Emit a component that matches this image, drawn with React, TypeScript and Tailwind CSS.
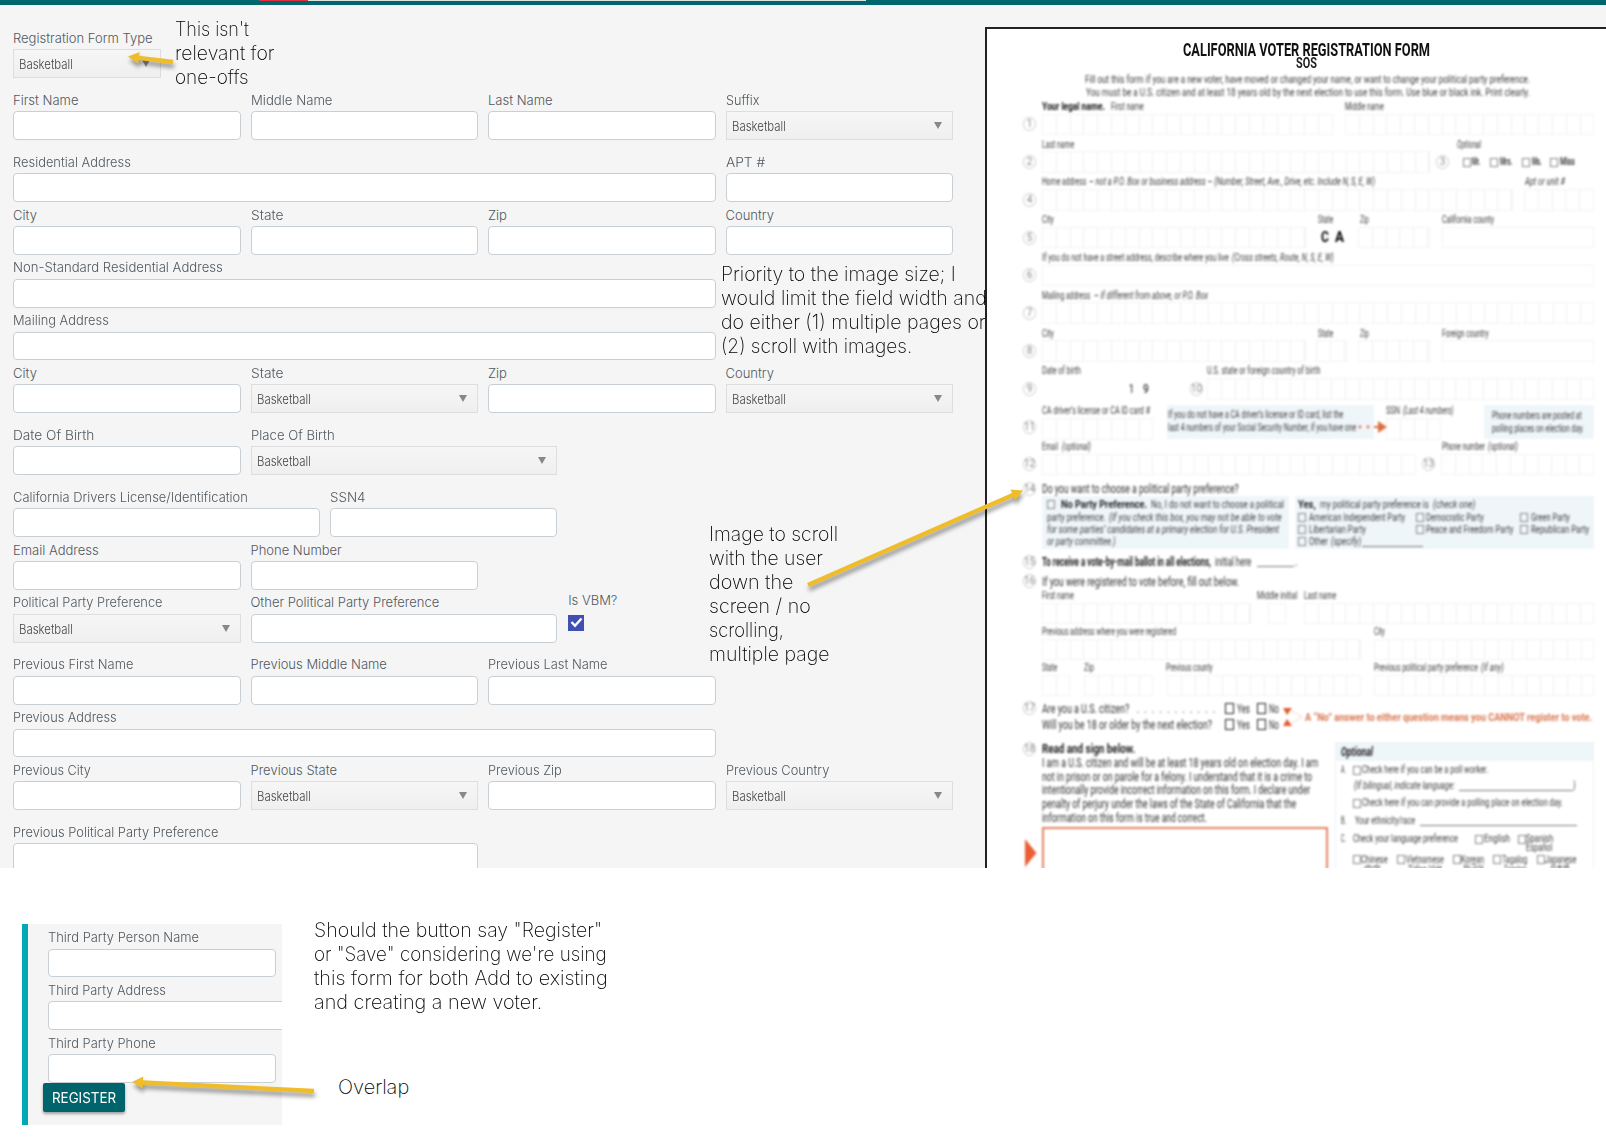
import { useLayoutEffect, useRef, useState, type ReactNode } from "react";

/* Single-line text stretched or condensed to a given width. */
function Fit({ w, children, className = "" }: { w: number; children: ReactNode; className?: string }) {
  const ref = useRef<HTMLSpanElement>(null);
  const [s, setS] = useState(1);
  useLayoutEffect(() => {
    if (ref.current && ref.current.offsetWidth) setS(w / ref.current.offsetWidth);
  }, [w]);
  return (
    <span className={"block shrink-0 whitespace-nowrap " + className} style={{ width: w }}>
      <span ref={ref} className="inline-block origin-left" style={{ transform: `scaleX(${s})` }}>
        {children}
      </span>
    </span>
  );
}

function Label({ t, w }: { t: string; w: number }) {
  return (
    <Fit w={w} className="h-6 pt-[0.500px] text-[13px] leading-6 font-light text-[#50585f]">
      {t}
    </Fit>
  );
}

function Field({ t, w, span }: { t: string; w: number; span: string }) {
  return (
    <div className={span}>
      <Label t={t} w={w} />
      <div className="h-[28.75px] rounded-[4px] border border-[#c8d0d6] bg-white" />
    </div>
  );
}

function Select({ t, w, span }: { t: string; w: number; span: string }) {
  return (
    <div className={span + " pb-[9.25px]"}>
      <Label t={t} w={w} />
      <div className="flex h-[28.75px] items-center justify-between border border-[#dedede] bg-linear-to-b from-[#f6f6f6] to-[#efefef] pr-[10px] pl-[5px]">
        <Fit w={54} className="pt-px text-[13.5px] leading-5 font-light text-[#444]">
          Basketball
        </Fit>
        <svg width="8" height="7" viewBox="0 0 8 7">
          <path d="M0 0h8L4 7z" fill="#888" />
        </svg>
      </div>
    </div>
  );
}

function Row({ children }: { children: ReactNode }) {
  return <div className="grid w-[940px] grid-cols-12 gap-x-[10px]">{children}</div>;
}

function Note({ lines, className }: { lines: [string, number][]; className: string }) {
  return (
    <div className={"absolute " + className}>
      {lines.map(([t, w]) => (
        <Fit key={t} w={w} className="h-[24.1px] text-[20px] leading-[24.1px] font-extralight text-black">
          {t}
        </Fit>
      ))}
    </div>
  );
}

/* ---------- Paper form ---------- */

type Item =
  | ["t", number, number, string, string?]
  | ["c", number, string?]
  | ["u", number, number]
  | ["g", number, number]
  | ["b", number, number]
  | ["n", number, string]
  | ["x", number, number, ReactNode];

function Badge({ n }: { n: string }) {
  return (
    <div className="-ml-px flex h-[14px] w-[13px] items-center justify-center rounded-full border border-[#c8c8c8] text-[10px] leading-none text-[#8a8a8a]">
      {n}
    </div>
  );
}

/* One line of the paper; items are given by their start and end along the sheet. */
function Line({ h, from = 987, items, className = "" }: { h: string; from?: number; items: Item[]; className?: string }) {
  let cursor = from;
  return (
    <div className={"flex items-center whitespace-nowrap " + h + " " + className}>
      {items.map((it, i) => {
        const kind = it[0];
        const x0 = it[1];
        let x1 = x0;
        let node: ReactNode = null;
        if (kind === "t") {
          x1 = it[2];
          node = (
            <Fit w={x1 - x0} className={"leading-none " + (it[4] ?? "")}>
              {it[3]}
            </Fit>
          );
        } else if (kind === "c") {
          x1 = x0 + 8;
          node = <div className={"h-[9px] w-[8px] border " + (it[2] ?? "border-[#888]")} />;
        } else if (kind === "u") {
          x1 = it[2];
          node = <div className="mt-[9px] h-px w-full bg-[#777]" />;
        } else if (kind === "g") {
          x1 = it[2];
          node = (
            <div className="h-[21.5px] border border-[#f0f4f0] bg-[repeating-linear-gradient(90deg,transparent_0,transparent_12.8px,#ecf1ec_12.8px,#ecf1ec_13.8px)]" />
          );
        } else if (kind === "b") {
          x1 = it[2];
          node = <div className="h-[21.5px] border border-[#f0f3f0]" />;
        } else if (kind === "n") {
          x1 = x0 + 12;
          node = <Badge n={it[2]} />;
        } else {
          x1 = it[2];
          node = it[3];
        }
        const ml = x0 - cursor;
        cursor = x1;
        return (
          <div key={i} className="shrink-0" style={{ marginLeft: ml, width: x1 - x0 }}>
            {node}
          </div>
        );
      })}
    </div>
  );
}

function FieldLines({ labels, cells }: { labels: Item[]; cells: Item[] }) {
  return (
    <div className="h-[37.8px] text-[10.5px] text-[#3c3c3c]">
      <Line h="h-[13px]" items={labels} />
      <Line h="h-[21.5px]" items={cells} />
    </div>
  );
}

const I = "italic";
const B = "font-bold";

function Paper() {
  return (
    <div className="relative mt-[22px] h-[841px] w-[621px] overflow-hidden border-t-2 border-l-2 border-[#222] bg-white">
      <div className="font-['Roboto','Noto_Sans_CJK_SC',sans-serif] text-[#333] blur-[0.6px]">
        <Line h="h-[18px]" className="mt-[13px] text-[17.5px] font-bold text-[#111]" items={[["t", 1183, 1430, "CALIFORNIA VOTER REGISTRATION FORM"]]} />
        <Line h="h-[9px]" className="text-[14.5px] font-bold text-[#222]" items={[["t", 1296, 1317, "SOS"]]} />
      </div>
      <div className="font-['Roboto','Noto_Sans_CJK_SC',sans-serif] text-[#333] blur-[0.95px]">
        <div className="pt-[4.500px] text-[11.5px] text-[#3c3c3c]">
          <Line h="h-[13px]" items={[["t", 1085, 1530, "Fill out this form if you are a new voter, have moved or changed your name, or want to change your political party preference."]]} />
          <Line h="h-[13px]" items={[["t", 1086, 1530, "You must be a U.S. citizen and at least 18 years old by the next election to use this form.  Use blue or black ink. Print clearly."]]} />
        </div>
        <div className="pt-[1px]">
          <FieldLines
            labels={[["t", 1042, 1105, "Your legal name.", "font-bold text-[11.5px] text-[#111]"], ["t", 1111, 1144, "First name"], ["t", 1345, 1384, "Middle name"]]}
            cells={[["n", 1024, "1"], ["g", 1042, 1333], ["g", 1345, 1594]]}
          />
          <FieldLines
            labels={[["t", 1042, 1074, "Last name"], ["t", 1457, 1481, "Optional", I]]}
            cells={[
              ["n", 1024, "2"], ["g", 1042, 1430], ["n", 1437, "3"],
              ["c", 1463], ["t", 1472, 1480, "Mr.", B], ["c", 1490], ["t", 1500, 1512, "Mrs.", B],
              ["c", 1522], ["t", 1532, 1542, "Ms.", B], ["c", 1550], ["t", 1560, 1575, "Miss", B],
            ]}
          />
          <FieldLines
            labels={[["t", 1042, 1086, "Home address"], ["t", 1089, 1375, "– not a P.O. Box or business address – (Number, Street, Ave., Drive, etc. Include N, S, E, W)", I], ["t", 1525, 1565, "Apt or unit #", I]]}
            cells={[["n", 1024, "4"], ["g", 1042, 1513], ["g", 1524, 1594]]}
          />
          <FieldLines
            labels={[["t", 1042, 1054, "City"], ["t", 1318, 1333, "State"], ["t", 1360, 1369, "Zip"], ["t", 1442, 1494, "California county"]]}
            cells={[["n", 1024, "5"], ["g", 1042, 1306], ["t", 1321, 1329, "C", "text-[15px] font-bold text-black"], ["t", 1335, 1344, "A", "text-[15px] font-bold text-black"], ["g", 1358, 1430], ["b", 1442, 1594]]}
          />
          <FieldLines
            labels={[["t", 1042, 1229, "If you do not have a street address, describe where you live"], ["t", 1232, 1334, "(Cross streets, Route, N, S, E, W)", I]]}
            cells={[["n", 1024, "6"], ["b", 1042, 1594]]}
          />
          <FieldLines
            labels={[["t", 1042, 1090, "Mailing address"], ["t", 1094, 1208, "– if different from above, or P.O. Box", I]]}
            cells={[["n", 1024, "7"], ["g", 1042, 1594]]}
          />
          <FieldLines
            labels={[["t", 1042, 1054, "City"], ["t", 1318, 1333, "State"], ["t", 1360, 1369, "Zip"], ["t", 1442, 1489, "Foreign country"]]}
            cells={[["n", 1024, "8"], ["g", 1042, 1306], ["g", 1316, 1347], ["g", 1358, 1430], ["b", 1442, 1594]]}
          />
          <FieldLines
            labels={[["t", 1042, 1081, "Date of birth"], ["t", 1207, 1320, "U.S. state or foreign country of birth"]]}
            cells={[["n", 1024, "9"], ["t", 1129, 1134, "1", "text-[12px] font-medium"], ["t", 1143, 1149, "9", "text-[12px] font-medium"], ["n", 1191, "10"], ["g", 1207, 1594]]}
          />
          <Line
            h="h-[37.8px]"
            className="text-[10.5px] text-[#3c3c3c]"
            items={[
              ["x", 1024, 1036, <div className="pt-[11px]"><Badge n="11" /></div>],
              ["x", 1042, 1153, <div><Line h="h-[14px]" from={1042} items={[["t", 1042, 1150, "CA driver’s license or CA ID card #"]]} /><Line h="h-[22px]" from={1042} items={[["g", 1042, 1153]]} /></div>],
              ["x", 1167, 1374, (
                <div className="h-[34px] bg-[#eff6fa] pt-[4px]">
                  <Line h="h-[13px]" from={1167} items={[["t", 1168, 1343, "If you do not have a CA driver’s license or ID card, list the"]]} />
                  <Line h="h-[13px]" from={1167} items={[
                    ["t", 1168, 1356, "last 4 numbers of your Social Security Number, if you have one"],
                    ["x", 1358, 1388, <svg width="30" height="12" viewBox="0 0 30 12" className="relative -top-px"><g fill="#dd7040"><circle cx="2" cy="6" r="1.400" /><circle cx="10" cy="6" r="1.400" /><path d="M16 5h4V0l9 6-9 6V7h-4z" /></g></svg>],
                  ]} />
                </div>
              )],
              ["x", 1386, 1441, <div><Line h="h-[14px]" from={1386} items={[["t", 1386, 1400, "SSN"], ["t", 1403, 1454, "(Last 4 numbers)", I]]} /><Line h="h-[22px]" from={1386} items={[["g", 1386, 1441]]} /></div>],
              ["x", 1484, 1594, (
                <div className="h-[34px] bg-[#eff6fa] pt-[5px]">
                  <Line h="h-[13px]" from={1484} items={[["t", 1492, 1582, "Phone numbers are posted at"]]} />
                  <Line h="h-[13px]" from={1484} items={[["t", 1492, 1584, "polling places on election day."]]} />
                </div>
              )],
            ]}
          />
          <FieldLines
            labels={[["t", 1042, 1058, "Email"], ["t", 1062, 1091, "(optional)", I], ["t", 1442, 1485, "Phone number"], ["t", 1488, 1518, "(optional)", I]]}
            cells={[["n", 1024, "12"], ["g", 1042, 1416], ["n", 1423, "13"], ["g", 1441, 1594]]}
          />
        </div>
        <Line h="h-[15px]" className="mt-[3px] text-[13px]" items={[["n", 1024, "14"], ["t", 1042, 1239, "Do you want to choose a political party preference?"]]} />
        <div className="ml-[55px] flex gap-[6px] text-[11.5px] text-[#3c3c3c]">
          <div className="h-[53px] w-[247px] bg-[#eff6fa] pt-px">
            <Line h="h-[14px]" from={1042} items={[["c", 1047], ["t", 1061, 1147, "No Party Preference.", "font-bold text-[#222]"], ["t", 1151, 1284, "No, I do not want to choose a political"]]} />
            <Line h="h-[12.5px]" from={1042} items={[["t", 1047, 1106, "party preference."], ["t", 1109, 1282, "(If you check this box, you may not be able to vote", I]]} />
            <Line h="h-[12.5px]" from={1042} items={[["t", 1047, 1279, "for some parties’ candidates at a primary election for U.S. President", I]]} />
            <Line h="h-[11px]" from={1042} items={[["t", 1047, 1116, "or party committee.)", I]]} />
          </div>
          <div className="h-[53px] w-[299px] bg-[#eff6fa] pt-px">
            <Line h="h-[14px]" from={1295} items={[["t", 1298, 1316, "Yes,", "font-bold text-[#222]"], ["t", 1320, 1429, "my political party preference is"], ["t", 1433, 1475, "(check one)", I]]} />
            <Line h="h-[12px]" from={1295} items={[["c", 1298], ["t", 1309, 1405, "American Independent Party"], ["c", 1416], ["t", 1426, 1484, "Democratic Party"], ["c", 1520], ["t", 1531, 1570, "Green Party"]]} />
            <Line h="h-[13px]" from={1295} items={[["c", 1298], ["t", 1309, 1366, "Libertarian Party"], ["c", 1416], ["t", 1426, 1513, "Peace and Freedom Party"], ["c", 1520], ["t", 1531, 1589, "Republican Party"]]} />
            <Line h="h-[11px]" from={1295} items={[["c", 1298], ["t", 1309, 1328, "Other"], ["t", 1331, 1361, "(specify)", I], ["u", 1362, 1423]]} />
          </div>
        </div>
        <Line h="h-[14px]" className="mt-[6px] text-[12.5px]" items={[["n", 1024, "15"], ["t", 1042, 1211, "To receive a vote-by-mail ballot in all elections,", "font-bold text-[#222]"], ["t", 1215, 1251, "initial here"], ["u", 1257, 1294], ["t", 1295, 1297, "."]]} />
        <Line h="h-[14px]" className="mt-[5px] text-[13px]" items={[["n", 1024, "16"], ["t", 1042, 1239, "If you were registered to vote before, fill out below."]]} />
        <div className="text-[10.5px] text-[#3c3c3c]">
          <Line h="h-[12px]" className="mt-[2px]" items={[["t", 1042, 1074, "First name"], ["t", 1257, 1297, "Middle initial"], ["t", 1304, 1336, "Last name"]]} />
          <Line h="h-[22px]" items={[["g", 1042, 1251], ["b", 1268, 1286], ["g", 1304, 1594]]} />
          <Line h="h-[12px]" className="mt-[2px]" items={[["t", 1042, 1176, "Previous address where you were registered"], ["t", 1374, 1385, "City"]]} />
          <Line h="h-[22px]" items={[["g", 1042, 1361], ["g", 1374, 1594]]} />
          <Line h="h-[12px]" className="mt-[2px]" items={[["t", 1042, 1057, "State"], ["t", 1084, 1094, "Zip"], ["t", 1166, 1213, "Previous county"], ["t", 1374, 1478, "Previous political party preference"], ["t", 1481, 1504, "(if any)", I]]} />
          <Line h="h-[22px]" items={[["g", 1042, 1070], ["g", 1084, 1153], ["g", 1167, 1361], ["g", 1374, 1594]]} />
        </div>
        <div className="relative mt-[4px] text-[13px]">
          <Line h="h-[16px]" items={[["n", 1024, "17"], ["t", 1042, 1129, "Are you a U.S. citizen?"], ["t", 1136, 1216, ". . . . . . . . . . .", "text-[#999]"], ["x", 1225, 1234, <div className="h-[11px] w-[9px] border border-[#222]" />], ["t", 1237, 1250, "Yes"], ["x", 1257, 1266, <div className="h-[11px] w-[9px] border border-[#222]" />], ["t", 1269, 1279, "No"]]} />
          <Line h="h-[17px]" items={[["t", 1042, 1212, "Will you be 18 or older by the next election?"], ["x", 1225, 1234, <div className="h-[11px] w-[9px] border border-[#222]" />], ["t", 1237, 1250, "Yes"], ["x", 1257, 1266, <div className="h-[11px] w-[9px] border border-[#222]" />], ["t", 1269, 1279, "No"]]} />
          <div className="absolute top-[7px] left-[296px] flex items-center">
            <svg width="21" height="20" viewBox="0 0 21 20">
              <path d="M0 1h9L4 8zM0 19h9L4 12z" fill="#e05a30" />
              <path d="M9 4l10 6-10 6" fill="none" stroke="#e8b8a0" strokeDasharray="2 1.5" />
            </svg>
            <Fit w={287} className="ml-[1px] text-[11.5px] leading-none font-bold text-[#d9764f]">
              A “No” answer to either question means you CANNOT register to vote.
            </Fit>
          </div>
        </div>
        <div className="mt-[9px] flex">
          <div className="w-[348px] text-[13px]">
            <Line h="h-[13px]" items={[["n", 1024, "18"], ["t", 1042, 1135, "Read and sign below.", "font-bold text-[#222]"]]} />
            <Line h="h-[13.7px]" items={[["t", 1042, 1318, "I am a U.S. citizen and will be at least 18 years old on election day. I am"]]} />
            <Line h="h-[13.7px]" items={[["t", 1042, 1312, "not in prison or on parole for a felony. I understand that it is a crime to"]]} />
            <Line h="h-[13.7px]" items={[["t", 1042, 1310, "intentionally provide incorrect information on this form. I declare under"]]} />
            <Line h="h-[13.7px]" items={[["t", 1042, 1296, "penalty of perjury under the laws of the State of California that the"]]} />
            <Line h="h-[13.7px]" items={[["t", 1042, 1207, "information on this form is true and correct."]]} />
            <div className="mt-[3px] flex">
              <svg width="12" height="28" viewBox="0 0 12 28" className="mt-[12px] ml-[38px]">
                <path d="M0 0l11.500 14L0 28z" fill="#ea5f35" />
              </svg>
              <div className="ml-[5px] h-[60px] w-[286px] border-2 border-[#e08463]" />
            </div>
          </div>
          <div className="h-[150px] w-[259px] border border-[#ecf1f4] text-[10.5px] text-[#3c3c3c]">
            <Line h="h-[18px]" from={1336} className="bg-[#eff6fa]" items={[["t", 1341, 1373, "Optional", "text-[12px] font-bold italic text-[#222]"]]} />
            <Line h="h-[16px]" from={1336} className="mt-px" items={[["t", 1341, 1346, "A."], ["c", 1353], ["t", 1362, 1488, "Check here if you can be a poll worker."]]} />
            <Line h="h-[16px]" from={1336} items={[["t", 1354, 1455, "(If bilingual, indicate language:", I], ["u", 1459, 1572], ["t", 1573, 1576, ")", I]]} />
            <Line h="h-[18px]" from={1336} items={[["c", 1353], ["t", 1362, 1563, "Check here if you can provide a polling place on election day."]]} />
            <Line h="h-[18px]" from={1336} items={[["t", 1341, 1346, "B."], ["t", 1355, 1415, "Your ethnicity/race"], ["u", 1420, 1577]]} />
            <Line h="h-[18px]" from={1336} items={[["t", 1341, 1346, "C."], ["t", 1353, 1458, "Check your language preference"], ["c", 1475], ["t", 1484, 1510, "English"], ["c", 1518], ["t", 1526, 1553, "Spanish"]]} />
            <Line h="h-[10px]" from={1336} className="-mt-[5px]" items={[["t", 1526, 1552, "Español"]]} />
            <Line h="h-[13px]" from={1336} items={[["c", 1353], ["t", 1361, 1388, "Chinese"], ["c", 1397], ["t", 1406, 1444, "Vietnamese"], ["c", 1453], ["t", 1461, 1484, "Korean"], ["c", 1493], ["t", 1502, 1527, "Tagalog"], ["c", 1537], ["t", 1545, 1576, "Japanese"]]} />
            <Line h="h-[8px]" from={1336} items={[["t", 1364, 1381, "中文"], ["t", 1408, 1442, "Tiếng Việt"], ["t", 1463, 1484, "한국어"], ["t", 1504, 1526, "Tagalog"], ["t", 1550, 1570, "日本語"]]} />
          </div>
        </div>
      </div>
    </div>
  );
}

/* Yellow callout arrow, from tail to tip. */
function Arrow({ x1, y1, x2, y2 }: { x1: number; y1: number; x2: number; y2: number }) {
  const len = Math.hypot(x2 - x1, y2 - y1);
  const a = (Math.atan2(y2 - y1, x2 - x1) * 180) / Math.PI;
  return (
    <g transform={`translate(${x1} ${y1}) rotate(${a})`}>
      <path d={`M0 -2.200H${len - 11}V-6L${len} 0L${len - 11} 6V2.200H0z`} fill="#efbd2b" />
    </g>
  );
}

export default function App() {
  return (
    <div className="relative h-[1146px] w-[1606px] overflow-hidden bg-white font-['Inter','Liberation_Sans',sans-serif]">
      <div className="h-[868px] overflow-hidden bg-[#f5f5f5]">
        <div className="flex h-[5px] items-start bg-[#00666e]">
          <div className="ml-[259px] h-px w-[49px] bg-[#e0303f]" />
          <div className="h-px w-[558px] bg-[#dfe5dc]" />
        </div>
        <div className="flex">
          <div className="w-[985px] shrink-0 pt-[20.3px] pl-[13px]">
            <div className="w-[148px]">
              <Select t="Registration Form Type" w={140} span="" />
            </div>
            <Row>
              <Field t="First Name" w={66} span="col-span-3" />
              <Field t="Middle Name" w={82} span="col-span-3" />
              <Field t="Last Name" w={65} span="col-span-3" />
              <Select t="Suffix" w={33} span="col-span-3" />
            </Row>
            <Row>
              <Field t="Residential Address" w={118} span="col-span-9" />
              <Field t="APT #" w={39} span="col-span-3" />
            </Row>
            <Row>
              <Field t="City" w={24} span="col-span-3" />
              <Field t="State" w={33} span="col-span-3" />
              <Field t="Zip" w={19} span="col-span-3" />
              <Field t="Country" w={48} span="col-span-3" />
            </Row>
            <Row>
              <Field t="Non-Standard Residential Address" w={210} span="col-span-9" />
            </Row>
            <Row>
              <Field t="Mailing Address" w={96} span="col-span-9" />
            </Row>
            <Row>
              <Field t="City" w={24} span="col-span-3" />
              <Select t="State" w={33} span="col-span-3" />
              <Field t="Zip" w={19} span="col-span-3" />
              <Select t="Country" w={48} span="col-span-3" />
            </Row>
            <Row>
              <Field t="Date Of Birth" w={81} span="col-span-3" />
              <Select t="Place Of Birth" w={84} span="col-span-4" />
            </Row>
            <Row>
              <Field t="California Drivers License/Identification" w={235} span="col-span-4" />
              <Field t="SSN4" w={35} span="col-span-3" />
            </Row>
            <Row>
              <Field t="Email Address" w={86} span="col-span-3" />
              <Field t="Phone Number" w={91} span="col-span-3" />
            </Row>
            <Row>
              <Select t="Political Party Preference" w={150} span="col-span-3" />
              <Field t="Other Political Party Preference" w={189} span="col-span-4" />
              <div className="col-span-2 -mt-[2px] pl-[1px]">
                <Label t="Is VBM?" w={49} />
                <div className="mt-[3px] flex h-[16px] w-[16px] items-center justify-center bg-[#3f4fb4]">
                  <svg width="14" height="12" viewBox="0 0 14 12">
                    <path d="M2.500 5l3.500 3.800L12.500 1.500" fill="none" stroke="#fff" strokeWidth="2.400" />
                  </svg>
                </div>
              </div>
            </Row>
            <Row>
              <Field t="Previous First Name" w={120} span="col-span-3" />
              <Field t="Previous Middle Name" w={136} span="col-span-3" />
              <Field t="Previous Last Name" w={120} span="col-span-3" />
            </Row>
            <Row>
              <Field t="Previous Address" w={104} span="col-span-9" />
            </Row>
            <Row>
              <Field t="Previous City" w={78} span="col-span-3" />
              <Select t="Previous State" w={87} span="col-span-3" />
              <Field t="Previous Zip" w={74} span="col-span-3" />
              <Select t="Previous Country" w={103} span="col-span-3" />
            </Row>
            <div className="w-[465px]">
              <Label t="Previous Political Party Preference" w={205} />
              <div className="h-[60px] rounded-[4px] border border-[#c8d0d6] bg-white" />
            </div>
            <Note className="top-[17px] left-[175px]" lines={[["This isn't", 74], ["relevant for", 99], ["one-offs", 74]]} />
            <Note
              className="top-[262px] left-[721px]"
              lines={[["Priority to the image size; I", 235], ["would limit the field width and", 266], ["do either (1) multiple pages or", 265], ["(2) scroll with images.", 191]]}
            />
            <Note
              className="top-[522px] left-[709px]"
              lines={[["Image to scroll", 129], ["with the user", 114], ["down the", 84], ["screen / no", 102], ["scrolling,", 75], ["multiple page", 121]]}
            />
          </div>
          <Paper />
        </div>
      </div>

      <div className="mt-[56px] ml-[22px] h-[201px] w-[260px] overflow-hidden border-l-[6px] border-[#00a9b5] bg-[#f5f5f5] pt-[0.500px] pl-[20px]">
        <div className="w-[228px]">
          <Field t="Third Party Person Name" w={151} span="" />
        </div>
        <div className="w-[300px]">
          <Field t="Third Party Address" w={118} span="" />
        </div>
        <div className="w-[228px]">
          <Field t="Third Party Phone" w={108} span="" />
        </div>
        <button className="relative -ml-[5px] flex h-[29px] w-[82px] items-center justify-center rounded-[2px] bg-[#00646c] text-[14px] text-white shadow-[0_2px_3px_rgba(0,0,0,0.35)]">
          <Fit w={64}>REGISTER</Fit>
        </button>
      </div>
      <Note
        className="top-[918px] left-[314px]"
        lines={[['Should the button say "Register"', 288], ['or "Save" considering we\'re using', 293], ["this form for both Add to existing", 294], ["and creating a new voter.", 228]]}
      />
      <Note className="top-[1075px] left-[338px]" lines={[["Overlap", 71]]} />

      <svg className="pointer-events-none absolute inset-0 drop-shadow-[1px_4px_2px_rgba(0,0,0,0.4)]" width="1606" height="1146" viewBox="0 0 1606 1146">
        <Arrow x1={173} y1={62} x2={128} y2={56.5} />
        <Arrow x1={808} y1={585} x2={1023} y2={490.5} />
        <Arrow x1={314} y1={1091} x2={132} y2={1082} />
      </svg>
    </div>
  );
}
